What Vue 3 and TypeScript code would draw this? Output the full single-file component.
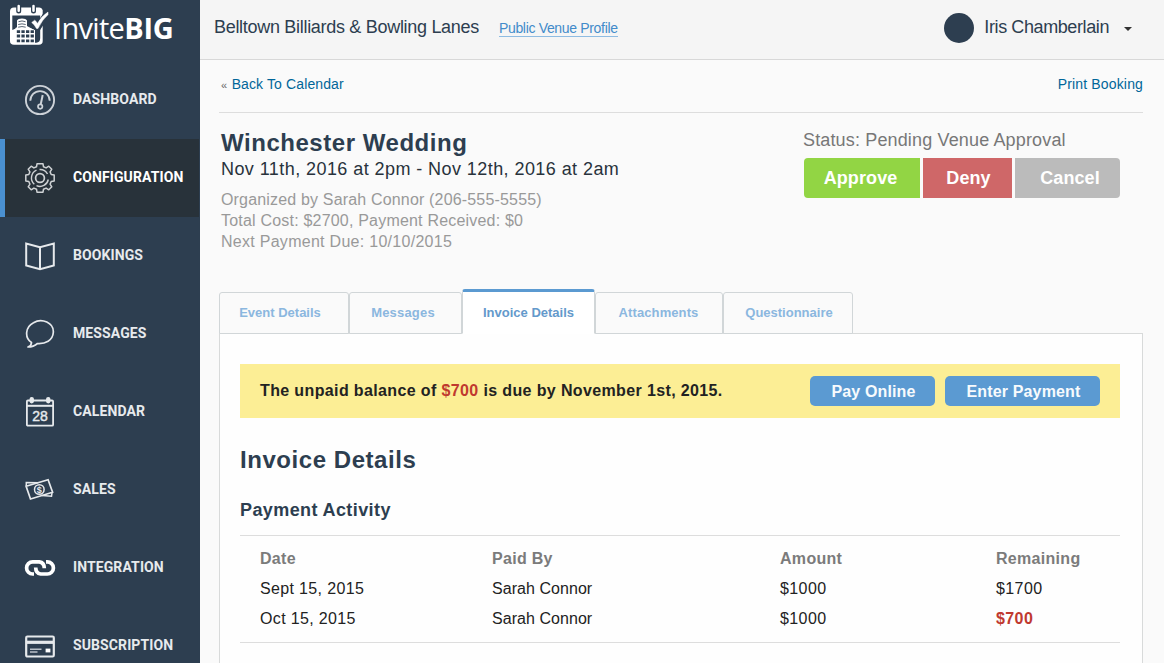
<script setup lang="ts">
import { ref } from 'vue'

interface NavItem { icon: string; label: string }
interface Tab { label: string; cls: string }
interface Payment { date: string; by: string; amount: string; remaining: string; due?: boolean }

const nav: NavItem[] = [
  { icon: 'gauge', label: 'Dashboard' },
  { icon: 'gear', label: 'Configuration' },
  { icon: 'book', label: 'Bookings' },
  { icon: 'bubble', label: 'Messages' },
  { icon: 'calendar', label: 'Calendar' },
  { icon: 'money', label: 'Sales' },
  { icon: 'chain', label: 'Integration' },
  { icon: 'card', label: 'Subscription' },
]
const activeNav = ref('Configuration')

const tabs: Tab[] = [
  { label: 'Event Details', cls: 'tab-event' },
  { label: 'Messages', cls: 'tab-messages' },
  { label: 'Invoice Details', cls: 'tab-invoice' },
  { label: 'Attachments', cls: 'tab-attachments' },
  { label: 'Questionnaire', cls: 'tab-questionnaire' },
]
const activeTab = ref('Invoice Details')

const payments: Payment[] = [
  { date: 'Sept 15, 2015', by: 'Sarah Connor', amount: '$1000', remaining: '$1700' },
  { date: 'Oct 15, 2015', by: 'Sarah Connor', amount: '$1000', remaining: '$700', due: true },
]
</script>

<template>
  <div class="app">
    <aside class="sidebar">
      <div class="logo">
        <svg class="logo-mark" width="40" height="42" viewBox="0 0 40 42">
          <path d="M4 3.500H29q3 0 3.700 3V37q0 3.800-4 3.800H4q-4 0-4-3.800V7.500q0-4 4-4z" fill="#fff" />
          <path d="M2.300 11.500H30.200V34q0 4.500-4 4.700H25V26.500L17 22V17q-4-3-10 0V24L2.300 26z" fill="#2d3e50" />
          <path d="M8.700 2.500V7M23.500 2.500V7" stroke="#2d3e50" stroke-width="5" stroke-linecap="round" />
          <path d="M8.700 2V6.800M23.500 2V6.800" stroke="#fff" stroke-width="2.500" stroke-linecap="round" />
          <path d="M7 16.500q1-2 5-2t5 2V23l8 3V40H5.500V24l1.500-.8z" fill="#fff" />
          <path d="M8.500 17.700q3.500-1.500 7 0M8.200 20.500q3.800-1.300 7.500 0M8.200 23.200q3.800-1.300 7.500 0" fill="none" stroke="#2d3e50" stroke-width=".8" />
          <path d="M6.800 27.600h18M6.800 32h18M6.800 36.800h18" stroke="#2d3e50" stroke-width="2.800" stroke-dasharray="3.300 1.300" />
          <path d="M23 18.500l4.500 5.500L36 11" fill="none" stroke="#2d3e50" stroke-width="6.500" />
          <path d="M21.700 18.500l3-2.300q1.500 1 2.800 3.300Q31.500 12 38 8v2.700Q32 16 28 24.500h-1.500q-2-4-4.800-6z" fill="#fff" stroke="#fff" stroke-width=".5" />
        </svg>
        <span class="logo-text"><span class="logo-invite">Invite</span><b class="logo-big">BIG</b></span>
      </div>
      <nav>
        <a v-for="n in nav" :key="n.label" class="nav-item" :class="{ active: n.label === activeNav }" @click="activeNav = n.label">
          <svg class="nav-icon" width="32" height="32" viewBox="0 0 32 32" fill="none" stroke="#e6e9ec" stroke-width="1.500">
            <g v-if="n.icon === 'gauge'" stroke="#cdd2d8">
              <circle cx="16" cy="16" r="14.100" stroke-width="1.900" />
              <path d="M6.300 16.800a9.700 9.700 0 1 1 19.400 0" stroke-width="1.900" />
              <path d="M18.700 11l-2 9.500" stroke-width="2" />
              <circle cx="16.200" cy="22.600" r="2.200" stroke-width="1.700" />
            </g>
            <g v-else-if="n.icon === 'gear'" stroke="#cfd2d4" stroke-width="1.500">
              <path d="M13 1.800h6l.5 3 2.600 1.100 2.700-1.700 3 3-1.700 2.700 1.100 2.600 3 .500v6l-3 .500-1.100 2.600 1.700 2.700-3 3-2.700-1.700-2.600 1.100-.5 3h-6l-.5-3-2.600-1.100-2.700 1.700-3-3 1.700-2.700-1.100-2.600-3-.500v-6l3-.500 1.100-2.600-1.700-2.700 3-3 2.700 1.700 2.600-1.100z" stroke-linejoin="round" />
              <circle cx="16" cy="16" r="4.400" stroke-width="1.700" />
              <path d="M10.300 22.300a8.500 8.500 0 0 1 2.200-14.100M15.500 7.500a8.500 8.500 0 0 1 8 4.500M24.300 17.500a8.500 8.500 0 0 1-11.800 6.200" stroke-width="1.400" />
            </g>
            <path v-else-if="n.icon === 'book'" d="M16 7.200L2.200 3.500v21.900L16 29.200l13.800-3.800V3.500zM16 7.200v22" stroke-width="2" />
            <path v-else-if="n.icon === 'bubble'" d="M7.500 24.500C.5 20 1 9 9.500 4.700 18-.5 30 5 29.300 14.500c-.5 8-8 11.500-15.800 11q-4 3.500-9.500 3.500 3.500-1.500 3.500-4.500z" stroke-width="1.700" stroke-linejoin="round" />
            <g v-else-if="n.icon === 'calendar'">
              <rect x="2.900" y="4.500" width="26.200" height="25.200" rx="1" stroke-width="1.800" />
              <path d="M3 9.800h26" stroke-width="2" />
              <rect x="6.300" y="1.700" width="2.900" height="5" rx="1.400" fill="#e6e9ec" />
              <rect x="22.800" y="1.700" width="2.900" height="5" rx="1.400" fill="#e6e9ec" />
              <text x="16" y="24.800" class="cal-num">28</text>
            </g>
            <g v-else-if="n.icon === 'money'">
              <path d="M2.100 12.200l22-6.500 4.500 12.500L6.500 25z" stroke-width="1.700" />
              <path d="M2.300 12V8.500l12 .3M18 21.500l9.500.8.500-3.500" stroke-width="1.500" />
              <circle cx="15.300" cy="15.500" r="4.800" />
              <text x="15.300" y="18.700" class="dollar">$</text>
            </g>
            <g v-else-if="n.icon === 'chain'" stroke="#fff" stroke-width="3.700">
              <path d="M10 22H8.700a6 6 0 0 1 0-12.200h6.600q5 .7 5 6.500" />
              <path d="M22 9.800h1.300a6 6 0 0 1 0 12.200h-6.600q-5-.7-5-6.500" />
            </g>
            <g v-else>
              <rect x="2.200" y="6.500" width="27.600" height="20" rx="1.200" stroke-width="2.200" />
              <path d="M2.500 12.300h27" stroke-width="3.200" />
              <path d="M6 19.300h11.500M6 22h7.500" stroke="#b9c0c8" />
              <rect x="22" y="19" width="4" height="3" fill="#fff" stroke="#fff" stroke-width=".8" />
            </g>
          </svg>
          <span>{{ n.label }}</span>
        </a>
      </nav>
    </aside>

    <main class="main">
      <header class="topbar">
        <span class="venue">Belltown Billiards &amp; Bowling Lanes</span>
        <a class="profile">Public Venue Profile</a>
        <div class="user">
          <span class="avatar"></span>
          <span class="user-name">Iris Chamberlain</span>
          <span class="caret"></span>
        </div>
      </header>

      <div class="content">
        <div class="crumbs">
          <span class="back"><span class="laquo">«</span><a class="back-link">Back To Calendar</a></span>
          <a class="print">Print Booking</a>
        </div>

        <section class="booking">
          <div class="summary">
            <h1>Winchester Wedding</h1>
            <p class="dates">Nov 11th, 2016 at 2pm - Nov 12th, 2016 at 2am</p>
            <p class="meta meta-organizer">Organized by Sarah Connor (206-555-5555)</p>
            <p class="meta meta-cost">Total Cost: $2700, Payment Received: $0</p>
            <p class="meta meta-next">Next Payment Due: 10/10/2015</p>
          </div>
          <div class="status">
            <p class="status-text">Status: Pending Venue Approval</p>
            <div class="actions">
              <button class="approve">Approve</button>
              <button class="deny">Deny</button>
              <button class="cancel">Cancel</button>
            </div>
          </div>
        </section>

        <div class="tabs">
          <button v-for="t in tabs" :key="t.label" class="tab" :class="[t.cls, { current: t.label === activeTab }]" @click="activeTab = t.label">{{ t.label }}</button>
        </div>

        <section class="panel">
          <div class="alert">
            <span class="alert-text">The unpaid balance of <em>$700</em> is due by November 1st, 2015.</span>
            <button class="pay">Pay Online</button>
            <button class="enter">Enter Payment</button>
          </div>
          <h2>Invoice Details</h2>
          <h3>Payment Activity</h3>
          <div class="table">
            <div class="row head"><span>Date</span><span>Paid By</span><span>Amount</span><span>Remaining</span></div>
            <div v-for="p in payments" :key="p.date" class="row">
              <span class="date">{{ p.date }}</span><span class="by">{{ p.by }}</span><span class="money">{{ p.amount }}</span><span class="money" :class="{ due: p.due }">{{ p.remaining }}</span>
            </div>
          </div>
        </section>
      </div>
    </main>
  </div>
</template>

<style>
body { margin: 0; overflow: hidden; }
</style>

<style scoped>
* { box-sizing: border-box; }
h1, h2, h3, p { margin: 0; }
button { border: 0; padding: 0; font-family: inherit; cursor: pointer; }
.app { display: flex; width: 1164px; height: 663px; overflow: hidden; background: #fafafa; font-family: "Liberation Sans", Arial, sans-serif; color: #222; white-space: nowrap; }

.sidebar { width: 200px; flex: none; background: #2d3e50; overflow: hidden; }
.logo { height: 61px; padding: 4px 0 0 10px; display: flex; align-items: flex-start; }
.logo-mark { flex: none; overflow: visible; }
.logo-text { margin: 4px 0 0 4px; color: #fff; font: 400 29px/40px "Open Sans", "Noto Sans", sans-serif; }
.logo-invite { font-weight: 400; letter-spacing: -.7px; }
.logo-big { font-weight: 700; letter-spacing: -.2px; }
.nav-item { display: flex; align-items: center; height: 78px; padding-left: 24px; border-left: 0 solid #4a90d0; color: #e7eaed; font: 700 14px/20px Roboto, sans-serif; letter-spacing: .1px; text-transform: uppercase; cursor: pointer; }
.nav-item.active { background: #28323a; color: #fff; border-left-width: 5px; padding-left: 19px; margin-right: 1px; }
.nav-icon { flex: none; margin-right: 17px; }
.nav-item span { margin-top: -3px; }
.cal-num { font: 400 14px "Liberation Sans", sans-serif; letter-spacing: 0; text-anchor: middle; fill: #e6e9ec; stroke: #e6e9ec; stroke-width: .4px; }
.dollar { font: 700 9px "Liberation Sans", sans-serif; letter-spacing: 0; text-anchor: middle; fill: #e6e9ec; stroke: none; }

.main { flex: 1; min-width: 0; }
.topbar { display: flex; align-items: center; height: 60px; padding: 0 32px 4px 14px; background: #f5f5f5; border-bottom: 1px solid #d8d8d8; color: #2d3e50; font-size: 18px; }
.venue { letter-spacing: -.3px; }
.profile { margin-left: 20px; margin-top: 2px; font-size: 14px; line-height: 15px; letter-spacing: -.33px; color: #428bca; border-bottom: 1px solid #8fbce2; }
.user { margin-left: auto; display: flex; align-items: center; }
.avatar { width: 30px; height: 30px; margin: 1px 10px 0 0; border-radius: 50%; background: #2d3e50; }
.user-name { letter-spacing: -.4px; }
.caret { margin: 3px 0 0 15px; border: 4px solid transparent; border-top-color: #333; border-bottom: 0; }

.content { padding: 0 21px 0 19px; }
.crumbs { display: flex; justify-content: space-between; height: 53px; padding-left: 2px; border-bottom: 1px solid #ddd; font-size: 14px; line-height: 48px; color: #006699; }
.laquo { margin-right: 4.500px; font-size: 11px; color: #666; }
.back-link { letter-spacing: .12px; }
.print { letter-spacing: .15px; }

.booking { display: flex; height: 176px; padding: 15px 23px 0 2px; }
.summary { width: 582px; }
h1 { font-size: 24px; line-height: 30px; letter-spacing: .54px; color: #2d3e50; }
.dates { margin-bottom: 9px; font-size: 18px; line-height: 22px; letter-spacing: .43px; color: #28323c; }
.meta { font-size: 16px; line-height: 21px; color: #999; }
.meta-organizer { letter-spacing: .17px; }
.meta-cost { letter-spacing: .2px; }
.meta-next { letter-spacing: .28px; }
.status-text { font-size: 18px; line-height: 24px; letter-spacing: .15px; color: #777; }
.actions { display: flex; gap: 3px; margin: 6px 0 0 1px; }
.actions button { height: 40px; color: #fff; font-size: 18px; font-weight: 700; letter-spacing: .1px; }
.approve { width: 116px; background: #92d544; border-radius: 4px 0 0 4px; padding-right: 3px; }
.deny { width: 89px; background: #cf6768; padding-left: 2px; }
.cancel { width: 105px; background: #bbb; border-radius: 0 4px 4px 0; padding-left: 5px; }

.tabs { display: flex; align-items: flex-end; height: 45px; position: relative; margin-bottom: -1px; }
.tab { height: 42px; padding-bottom: 2px; border: 1px solid #d1d6d8; border-radius: 3px 3px 0 0; background: #fafafa; color: #8bb7df; font-size: 13px; font-weight: 700; }
.tab-event { width: 130px; padding-right: 8px; }
.tab-messages { width: 113px; letter-spacing: .2px; padding-right: 5px; }
.tab-invoice { width: 133px; }
.tab-attachments { width: 128px; letter-spacing: .1px; padding-right: 1px; }
.tab-questionnaire { width: 130px; padding-left: 2px; }
.tab.current { height: 45px; padding-bottom: 1px; border-top: 3px solid #5b9ad1; border-bottom-color: #fff; background: #fff; color: #6499cb; }

.panel { height: 400px; padding: 30px 22px 0 20px; border: 1px solid #d8dada; background: #fefefe; }
.alert { display: flex; align-items: center; height: 54px; padding: 0 20px; background: #fcee95; font-size: 16px; font-weight: 700; }
.alert-text { letter-spacing: .37px; }
.alert em { font-style: normal; color: #c0392f; }
.alert button { height: 30px; padding: 2px 0 0 2px; border-radius: 5px; background: #5b9ad2; color: #f7fafd; font-size: 16px; font-weight: 700; letter-spacing: .15px; }
.pay { width: 125px; margin-left: auto; }
.enter { width: 155px; margin-left: 10px; }
h2 { margin-top: 26px; font-size: 24px; line-height: 32px; letter-spacing: .55px; color: #2d3e50; }
h3 { margin-top: 22px; font-size: 18px; line-height: 24px; letter-spacing: .4px; color: #2d3e50; }
.table { margin-top: 13px; height: 108px; padding: 8px 20px 0; border-top: 1px solid #ddd; border-bottom: 1px solid #ddd; }
.row { display: grid; grid-template-columns: 232px 288px 216px 1fr; font-size: 16px; line-height: 30px; color: #222; letter-spacing: .05px; }
.head { font-weight: 700; color: #7b7b7b; letter-spacing: .3px; }
.date { letter-spacing: .35px; }
.money { letter-spacing: .4px; }
.due { font-weight: 700; color: #c0392f; }
</style>
